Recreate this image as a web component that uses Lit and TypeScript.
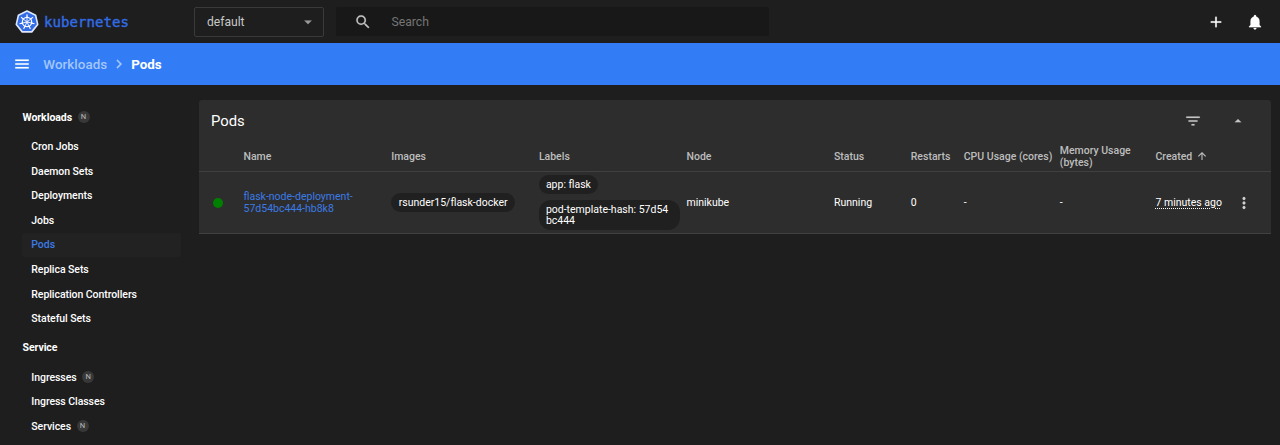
import { LitElement, html, css, svg, nothing } from "lit";
import { customElement, property } from "lit/decorators.js";

const ICONS: Record<string, string> = {
  menu: "M3 18h18v-2H3v2zm0-5h18v-2H3v2zm0-7v2h18V6H3z",
  chevron: "M10 6 8.59 7.41 13.17 12l-4.58 4.59L10 18l6-6z",
  search:
    "M15.5 14h-.79l-.28-.27A6.471 6.471 0 0 0 16 9.5 6.5 6.5 0 1 0 9.5 16c1.61 0 3.09-.59 4.23-1.57l.27.28v.79l5 4.99L20.49 19l-4.99-5zm-6 0C7.01 14 5 11.99 5 9.5S7.01 5 9.5 5 14 7.01 14 9.5 11.99 14 9.5 14z",
  add: "M19 13h-6v6h-2v-6H5v-2h6V5h2v6h6v2z",
  bell: "M12 22c1.1 0 2-.9 2-2h-4c0 1.1.89 2 2 2zm6-6v-5c0-3.07-1.64-5.64-4.5-6.32V4c0-.83-.67-1.5-1.5-1.5s-1.5.67-1.5 1.5v.68C7.63 5.36 6 7.92 6 11v5l-2 2v1h16v-1l-2-2z",
  filter: "M10 18h4v-2h-4v2zM3 6v2h18V6H3zm3 7h12v-2H6v2z",
  up: "m7 14 5-5 5 5z",
  down: "m7 10 5 5 5-5z",
  arrow: "m4 12 1.41 1.41L11 7.83V20h2V7.83l5.58 5.59L20 12l-8-8-8 8z",
  more: "M12 8c1.1 0 2-.9 2-2s-.9-2-2-2-2 .9-2 2 .9 2 2 2zm0 2c-1.1 0-2 .9-2 2s.9 2 2 2 2-.9 2-2-.9-2-2-2zm0 6c-1.1 0-2 .9-2 2s.9 2 2 2 2-.9 2-2-.9-2-2-2z",
};

@customElement("md-icon")
class MdIcon extends LitElement {
  @property() name = "menu";
  static styles = css`
    :host { display: block; flex: none; width: 21px; height: 21px; }
    svg { display: block; width: 100%; height: 100%; fill: currentColor; stroke: currentColor; stroke-width: 0.2; }
  `;
  render() {
    return html`<svg viewBox="0 0 24 24"><path d=${ICONS[this.name]}></path></svg>`;
  }
}

@customElement("kube-logo")
class KubeLogo extends LitElement {
  static styles = css`
    :host { display: block; width: 26px; height: 26px; flex: none; }
    svg { display: block; width: 100%; height: 100%; }
  `;
  render() {
    const spokes = [0, 1, 2, 3, 4, 5, 6].map(
      (i) => svg`<g transform="rotate(${(i * 360) / 7})">
        <path d="M0-2.5V-16" stroke-width="2"></path>
        <path d="M0-12.5V-19" stroke-width="2.5"></path>
      </g>`
    );
    return html`<svg viewBox="-32 -32 64 64">
      <path d="M0-27 21.1-16.8 26.3 6 11.7 24.3H-11.7L-26.3 6-21.1-16.8Z"
        fill="#326ce5" stroke="#dfe8fb" stroke-width="4" stroke-linejoin="round"></path>
      <g stroke="#fff" fill="none">
        <circle r="11.5" stroke-width="3"></circle>
        ${spokes}
        <circle r="2.5" fill="#fff"></circle>
      </g>
    </svg>`;
  }
}

interface NavItem { label: string; n?: boolean; active?: boolean }
const NAV: { title: string; n?: boolean; items: NavItem[] }[] = [
  {
    title: "Workloads", n: true,
    items: [
      { label: "Cron Jobs" }, { label: "Daemon Sets" }, { label: "Deployments" },
      { label: "Jobs" }, { label: "Pods", active: true }, { label: "Replica Sets" },
      { label: "Replication Controllers" }, { label: "Stateful Sets" },
    ],
  },
  {
    title: "Service",
    items: [{ label: "Ingresses", n: true }, { label: "Ingress Classes" }, { label: "Services", n: true }],
  },
];

@customElement("side-nav")
class SideNav extends LitElement {
  static styles = css`
    :host { display: block; width: 159px; padding: 15.5px 0 0 22px; flex: none; box-sizing: content-box;
      font-size: 10.5px; font-weight: 500; color: #fff; letter-spacing: -0.06px; }
    .row { display: flex; align-items: center; gap: 5.5px; height: 24.63px; padding-left: 9.3px; border-radius: 2px; }
    .title { height: 33.6px; padding-left: 0.5px; font-weight: 700; }
    .active { color: #3b7be6; background: #222; }
    .n { width: 12px; height: 12px; border-radius: 50%; background: #383838; color: #b8b8b8;
      font-size: 7.6px; line-height: 12.5px; text-align: center; font-weight: 400; }
  `;
  badge(n?: boolean) {
    return n ? html`<span class="n">N</span>` : nothing;
  }
  render() {
    return NAV.map(
      (g) => html`<div class="row title"><span>${g.title}</span>${this.badge(g.n)}</div>
        ${g.items.map(
          (i) => html`<div class="row ${i.active ? "active" : ""}"><span>${i.label}</span>${this.badge(i.n)}</div>`
        )}`
    );
  }
}

@customElement("pod-card")
class PodCard extends LitElement {
  static styles = css`
    :host { display: block; flex: 1; height: 134px; margin: 15px 9px 0 18px; background: #2d2d2d;
      border-radius: 3px 3px 0 0; font-size: 10.5px; color: #fff; overflow: hidden; }
    .head { display: flex; align-items: center; height: 41px; padding: 0 25px 0 12px; color: #c4c4c4; }
    .head h2 { flex: 1; margin: 0; font-size: 14.8px; font-weight: 400; color: #fff; }
    .filter { width: 18px; height: 18px; margin-right: 28px; }
    .up { width: 16px; height: 16px; }
    .grid { display: grid; align-items: center; align-content: center; box-sizing: border-box;
      border-bottom: 1px solid #404040;
      grid-template-columns: 44.5px 147.7px 147.7px 147.6px 147.5px 76.8px 53px 96px 95.7px 80px 1fr; }
    .th { height: 31px; padding-top: 2px; font-weight: 500; color: #bdbdbd; line-height: 12.3px; }
    .td { height: 62px; line-height: 12.3px; }
    .cell { padding-top: 2px; }
    .sort { display: flex; align-items: center; gap: 4px; }
    .sort md-icon { width: 12px; height: 12px; margin-top: -1px; }
    .dot { width: 10px; height: 10px; border-radius: 50%; background: #008000; margin-left: 14px; }
    .link { color: #3b7be6; padding-top: 1.4px; }
    .chips { display: flex; flex-direction: column; align-items: flex-start; gap: 6px; }
    .chip { box-sizing: border-box; padding: 4.6px 7px 3.8px; border-radius: 10px; background: #202020; line-height: 10.5px; }
    .image { padding: 5px 7px 3.4px 7.5px; }
    .chip.wide { width: 141px; padding: 5px 7px 3.4px; border-radius: 12px; }
    .ago { text-decoration: underline dotted 1px; text-underline-offset: 2px; }
    .more { width: 18px; height: 18px; color: #d0d0d0; }
  `;
  render() {
    return html`
      <div class="head"><h2>Pods</h2><md-icon class="filter" name="filter"></md-icon><md-icon class="up" name="up"></md-icon></div>
      <div class="grid th">
        <span></span><span>Name</span><span>Images</span><span>Labels</span><span>Node</span><span>Status</span>
        <span>Restarts</span><span>CPU Usage (cores)</span><span>Memory Usage<br />(bytes)</span>
        <span class="sort">Created <md-icon name="arrow"></md-icon></span><span></span>
      </div>
      <div class="grid td">
        <span class="dot"></span>
        <span class="link">flask-node-deployment-<br />57d54bc444-hb8k8</span>
        <div class="chips"><span class="chip image">rsunder15/flask-docker</span></div>
        <div class="chips"><span class="chip">app: flask</span><span class="chip wide">pod-template-hash: 57d54<br />bc444</span></div>
        <span class="cell">minikube</span><span class="cell">Running</span><span class="cell">0</span>
        <span class="cell">-</span><span class="cell">-</span>
        <div class="cell"><span class="ago">7 minutes ago</span></div>
        <md-icon class="more" name="more"></md-icon>
      </div>`;
  }
}

@customElement("app-root")
class AppRoot extends LitElement {
  static styles = css`
    :host { display: flex; flex-direction: column; height: 445px; overflow: hidden; background: #1e1e1e;
      font-family: Roboto, "Liberation Sans", sans-serif; color: #fff; }
    .top { display: flex; align-items: center; height: 43px; flex: none; padding: 0 16.5px 0 14px; box-sizing: border-box; }
    .brand { display: flex; align-items: center; gap: 4px; width: 180px; color: #326ce5; }
    .word { font: 400 14px "DejaVu Sans Mono", monospace; letter-spacing: 0.08px; -webkit-text-stroke: 0.4px #326ce5; }
    .select { display: flex; align-items: center; justify-content: space-between; box-sizing: border-box;
      width: 130px; height: 30px; border: 1px solid #3a3a3a; border-radius: 2px; padding: 0 6.5px 0 12px;
      font-size: 12.1px; color: #c8c8c8; }
    .select md-icon { width: 18px; height: 18px; color: #9a9a9a; }
    .search { display: flex; align-items: center; width: 433px; height: 29px; margin-left: 12px; box-sizing: border-box;
      padding-left: 18px; gap: 19.5px; background: #181818; border-radius: 2px; font-size: 12.2px; color: #757575; }
    .search md-icon { width: 18px; height: 18px; color: #c4c4c4; }
    .actions { display: flex; align-items: center; gap: 21px; margin-left: auto; }
    .actions md-icon { width: 18px; height: 18px; }
    .bar { display: flex; align-items: center; height: 42px; flex: none; background: #327df5; padding-left: 13px;
      font-size: 13.4px; font-weight: 500; }
    .burger { width: 18px; height: 18px; margin-right: 12.3px; }
    .dim { color: #a3c6fb; letter-spacing: 0.03px; }
    .bar .sep { width: 18px; height: 18px; margin: 0 3px; color: #a3c6fb; }
    .here { font-weight: 700; letter-spacing: -0.05px; }
    .body { display: flex; align-items: flex-start; flex: 1; min-height: 0; }
  `;
  render() {
    return html`
      <header class="top">
        <div class="brand"><kube-logo></kube-logo><span class="word">kubernetes</span></div>
        <div class="select"><span>default</span><md-icon name="down"></md-icon></div>
        <div class="search"><md-icon name="search"></md-icon><span>Search</span></div>
        <div class="actions"><md-icon name="add"></md-icon><md-icon name="bell"></md-icon></div>
      </header>
      <nav class="bar">
        <md-icon class="burger" name="menu"></md-icon><span class="dim">Workloads</span>
        <md-icon class="sep" name="chevron"></md-icon><span class="here">Pods</span>
      </nav>
      <div class="body"><side-nav></side-nav><pod-card></pod-card></div>`;
  }
}
